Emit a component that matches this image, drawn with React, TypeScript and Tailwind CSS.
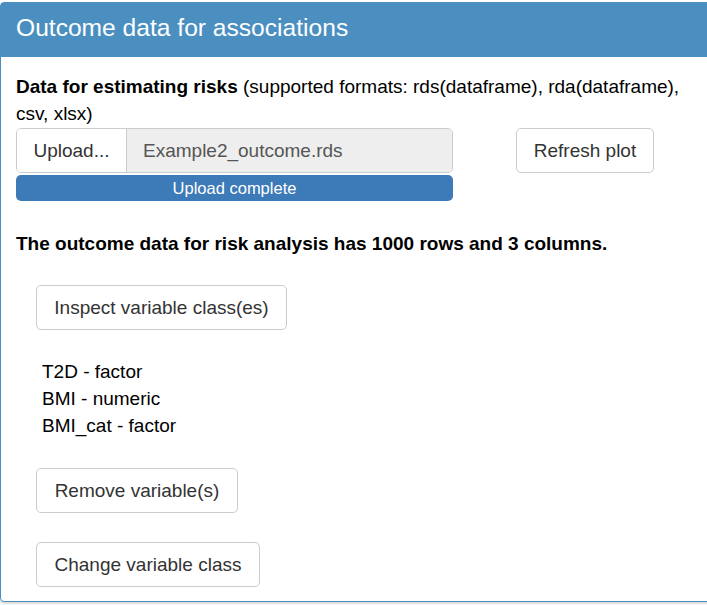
import React from "react";

const font = { fontFamily: '"Liberation Sans", Arial, sans-serif' };

function Btn({ label, w }: { label: string; w: string }) {
  return (
    <button
      className={`${w} h-[45px] border border-[#cccccc] rounded-[5px] bg-white text-[#333333] text-[19px] leading-[27px] py-[8px] text-center whitespace-nowrap`}
    >
      {label}
    </button>
  );
}

export default function App() {
  return (
    <div className="w-[707px] h-[605px] overflow-hidden bg-white" style={font}>
      <div className="mt-[2px] w-[740px] rounded-[4px] border border-[#4a8fc0] bg-white shadow-[0_2px_2px_rgba(0,0,0,0.14)]">
        <div className="bg-[#4a8fc0] h-[54px] px-[15px] pt-[11px] text-white text-[24.6px] leading-[28px] whitespace-nowrap">
          Outcome data for associations
        </div>
        <div className="px-[15px] pt-[16px] pb-[14px] text-black">
          <div className="text-[19px] leading-[27px] whitespace-nowrap">
            <span className="font-bold">Data for estimating risks</span> (supported formats: rds(dataframe), rda(dataframe),
            <br />
            csv, xlsx)
          </div>
          <div className="flex mt-[1px]">
            <div className="w-[437px]">
              <div className="flex h-[45px] rounded-[5px] border border-[#cccccc] overflow-hidden text-[19px] leading-[27px]">
                <div className="w-[110px] shrink-0 bg-white border-r border-[#cccccc] flex items-center justify-center text-[#333333]">
                  Upload...
                </div>
                <div className="flex-1 bg-[#eeeeee] flex items-center pl-[16px] text-[#555555] whitespace-nowrap">
                  Example2_outcome.rds
                </div>
              </div>
              <div className="mt-[2px] h-[26px] rounded-[5px] bg-[#3d7ab8] text-white text-[16.5px] leading-[26px] text-center">
                Upload complete
              </div>
            </div>
            <div className="ml-[63px]">
              <Btn label="Refresh plot" w="w-[138px]" />
            </div>
          </div>
          <div className="mt-[29px] text-[19px] leading-[27px] font-bold whitespace-nowrap">
            The outcome data for risk analysis has 1000 rows and 3 columns.
          </div>
          <div className="ml-[20px] mt-[28px] flex flex-col items-start">
            <Btn label="Inspect variable class(es)" w="w-[251px]" />
            <div className="mt-[28px] ml-[6px] text-[19px] leading-[27px]">
              <div>T2D - factor</div>
              <div>BMI - numeric</div>
              <div>BMI_cat - factor</div>
            </div>
            <div className="mt-[29px]">
              <Btn label="Remove variable(s)" w="w-[202px]" />
            </div>
            <div className="mt-[29px]">
              <Btn label="Change variable class" w="w-[224px]" />
            </div>
          </div>
        </div>
      </div>
    </div>
  );
}
